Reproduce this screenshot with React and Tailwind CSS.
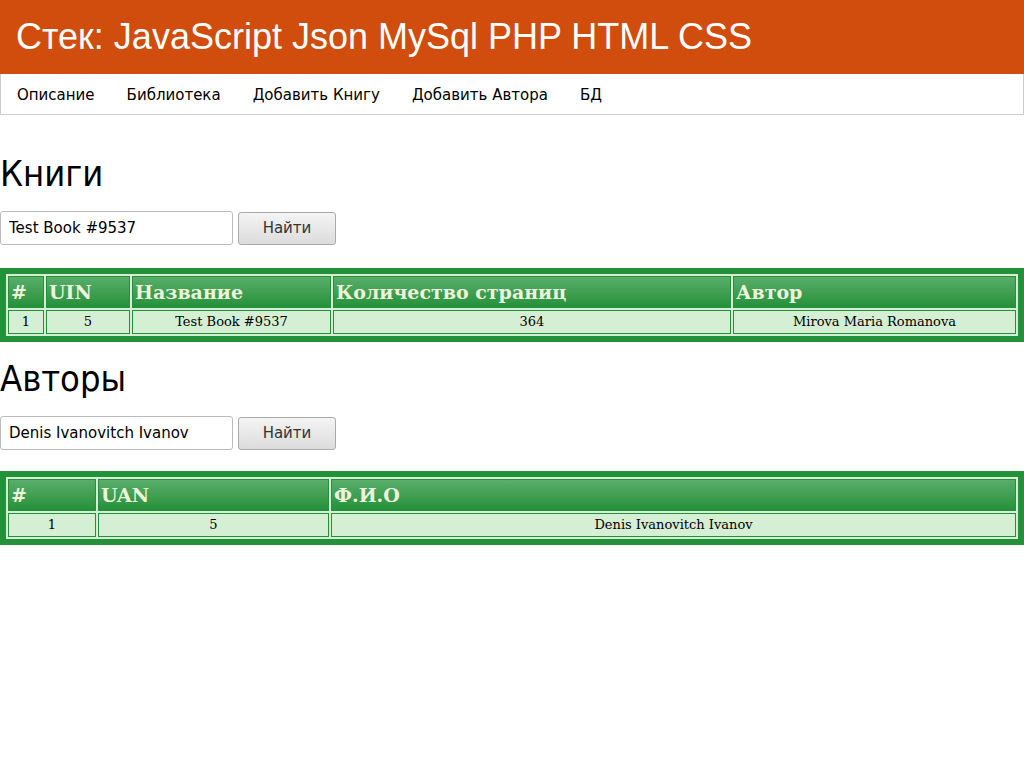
const books = [
  { n: 1, uin: 5, title: "Test Book #9537", pages: 364, author: "Mirova Maria Romanova" },
];
const authors = [{ n: 1, uan: 5, name: "Denis Ivanovitch Ivanov" }];

const th =
  "border border-[#2a8f3c] bg-gradient-to-b from-[#58ae6a] to-[#23913a] text-left align-middle px-[2px] h-[32px] text-[19px] font-bold text-[#eef3dc]";
const td = "border border-[#23913a] bg-[#d4efd4] text-center h-[24px] text-[13px] text-black";

function Search({ value }) {
  return (
    <div className="flex items-center gap-[5px]">
      <input
        defaultValue={value}
        className="w-[233px] h-[34px] border border-[#bbbbbb] rounded-[3px] px-[8px] text-[15px] text-black outline-none"
      />
      <button className="w-[98px] h-[33px] border border-[#aaaaaa] rounded-[3px] bg-gradient-to-b from-[#f4f4f4] to-[#dcdcdc] text-[15px] text-[#333]">
        Найти
      </button>
    </div>
  );
}

export default function App() {
  return (
    <div className="min-h-screen bg-white font-['DejaVu_Sans',sans-serif]">
      <header className="bg-[#d04d0d] h-[74px] flex items-center px-4">
        <h1 className="text-white text-[36px] font-['Liberation_Sans',Arial,sans-serif]">
          Стек: JavaScript Json MySql PHP HTML CSS
        </h1>
      </header>

      <nav className="h-[41px] pt-[2px] border border-[#cccccc] border-t-0 flex items-center text-[15px] text-black">
        <a className="px-4">Описание</a>
        <a className="px-4">Библиотека</a>
        <a className="px-4">Добавить Книгу</a>
        <a className="px-4">Добавить Автора</a>
        <a className="px-4">БД</a>
      </nav>

      <h2 className="text-[36px] mt-[38px] leading-[42px] font-['DejaVu_Sans_Condensed','DejaVu_Sans',sans-serif]">
        Книги
      </h2>
      <div className="mt-[16px]">
        <Search value="Test Book #9537" />
      </div>

      <div className="mt-[23px] bg-[#23913a] p-[6px] font-['DejaVu_Serif',serif]">
        <table className="w-full border-separate border-spacing-[2px] bg-[#d4efd4]">
          <thead>
            <tr>
              <th className={th + " w-[36px]"}>#</th>
              <th className={th + " w-[84px]"}>UIN</th>
              <th className={th + " w-[199px]"}>Название</th>
              <th className={th + " w-[398px]"}>Количество страниц</th>
              <th className={th}>Автор</th>
            </tr>
          </thead>
          <tbody>
            {books.map((b) => (
              <tr key={b.n}>
                <td className={td}>{b.n}</td>
                <td className={td}>{b.uin}</td>
                <td className={td}>{b.title}</td>
                <td className={td}>{b.pages}</td>
                <td className={td}>{b.author}</td>
              </tr>
            ))}
          </tbody>
        </table>
      </div>

      <h2 className="text-[36px] mt-[16px] leading-[42px] font-['DejaVu_Sans_Condensed','DejaVu_Sans',sans-serif]">
        Авторы
      </h2>
      <div className="mt-[16px]">
        <Search value="Denis Ivanovitch Ivanov" />
      </div>

      <div className="mt-[21px] bg-[#23913a] p-[6px] font-['DejaVu_Serif',serif]">
        <table className="w-full border-separate border-spacing-[2px] bg-[#d4efd4]">
          <thead>
            <tr>
              <th className={th + " w-[88px]"}>#</th>
              <th className={th + " w-[231px]"}>UAN</th>
              <th className={th}>Ф.И.О</th>
            </tr>
          </thead>
          <tbody>
            {authors.map((a) => (
              <tr key={a.n}>
                <td className={td}>{a.n}</td>
                <td className={td}>{a.uan}</td>
                <td className={td}>{a.name}</td>
              </tr>
            ))}
          </tbody>
        </table>
      </div>
    </div>
  );
}
